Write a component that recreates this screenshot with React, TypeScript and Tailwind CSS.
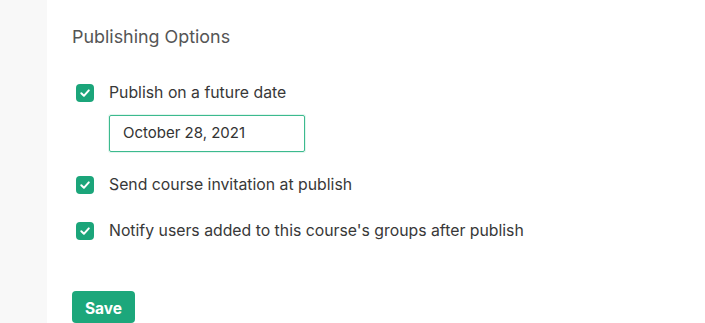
import React from "react";

function Check() {
  return (
    <span className="flex h-[18px] w-[18px] shrink-0 items-center justify-center rounded-[4px] bg-[#1ba57a]">
      <svg width="12" height="12" viewBox="0 0 12 12" fill="none">
        <path d="M2.3 6.3 L4.9 8.8 L9.8 3.4" stroke="white" strokeWidth="2" strokeLinecap="round" strokeLinejoin="round" />
      </svg>
    </span>
  );
}

function Row({ label }: { label: string }) {
  return (
    <label className="flex items-center gap-[15px] pl-[4px]">
      <Check />
      <span className="text-[15.8px] leading-[22px] text-[#383838]">{label}</span>
    </label>
  );
}

export default function App() {
  return (
    <div className="flex h-[323px] w-[705px] overflow-hidden bg-white" style={{ fontFamily: "Inter, 'Noto Sans', sans-serif" }}>
      <div className="h-full w-[47px] shrink-0 bg-[#f8f8f8]" />
      <div className="flex flex-col pl-[25px] pt-[26px]">
        <h2 className="text-[17.9px] leading-[22px] text-[#555555]">Publishing Options</h2>
        <div className="mt-[34px] flex flex-col">
          <Row label="Publish on a future date" />
          <div className="ml-[37px] mt-[11px] flex h-[37px] w-[196px] items-center rounded-[2px] border border-[#3cba8e] px-[13px] text-[15px] text-[#333333] shadow-[0_0_0_1px_rgba(60,186,142,0.15)]">
            October 28, 2021
          </div>
          <div className="mt-[22px]">
            <Row label="Send course invitation at publish" />
          </div>
          <div className="mt-[24px]">
            <Row label="Notify users added to this course's groups after publish" />
          </div>
        </div>
        <button className="mt-[49px] flex h-[40px] w-[63px] items-start justify-center self-start rounded-[4px] bg-[#1ca77b] pt-[7px] text-[15.5px] font-bold leading-[22px] text-white">
          Save
        </button>
      </div>
    </div>
  );
}
